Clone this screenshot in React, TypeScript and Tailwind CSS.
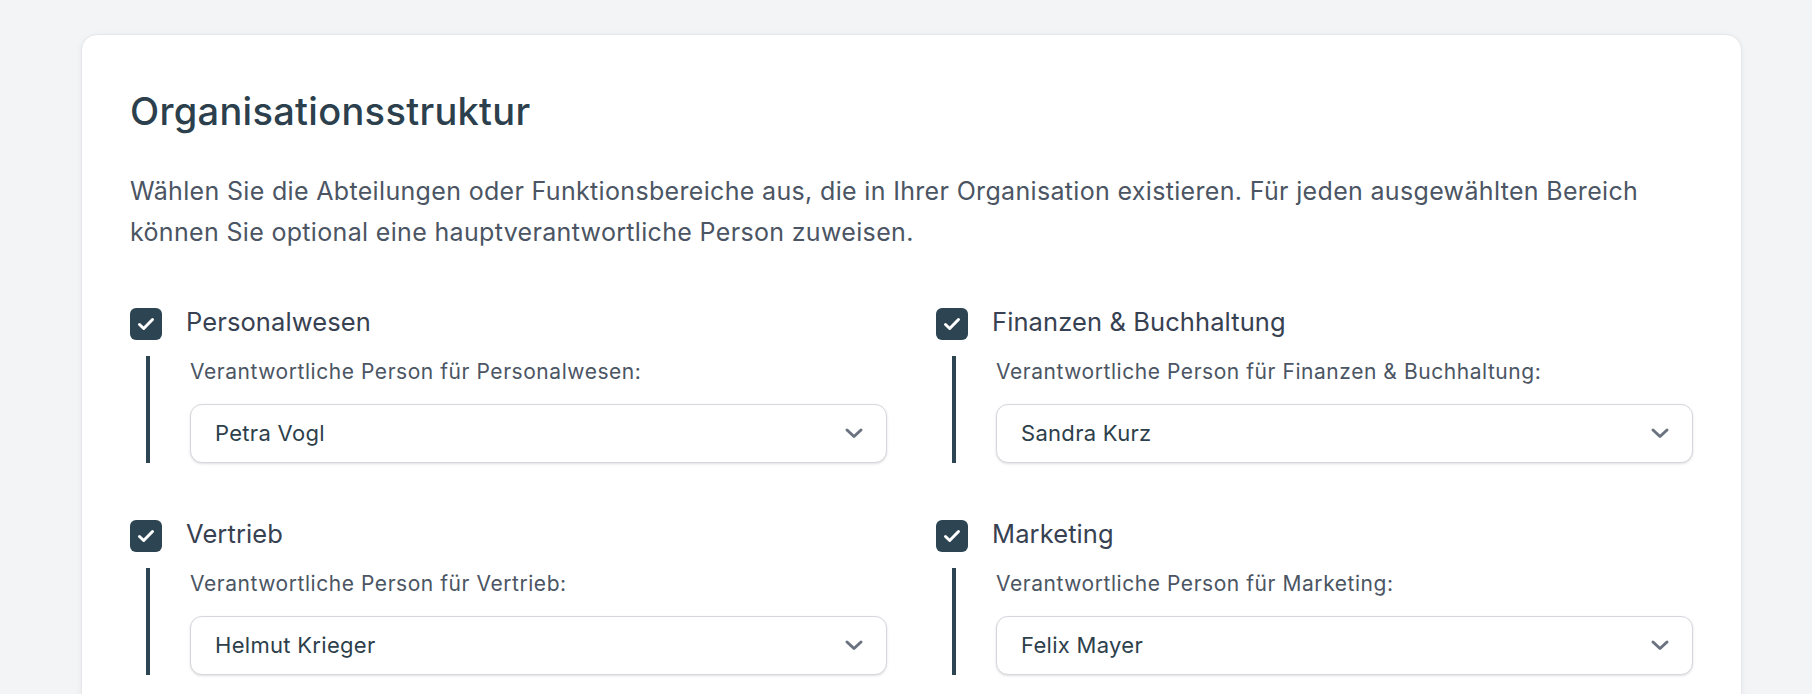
const bereiche = [
  { name: "Personalwesen", person: "Petra Vogl" },
  { name: "Finanzen & Buchhaltung", person: "Sandra Kurz" },
  { name: "Vertrieb", person: "Helmut Krieger" },
  { name: "Marketing", person: "Felix Mayer" },
];

const CheckIcon = () => (
  <svg width="18" height="14" viewBox="0 0 18 14" fill="none">
    <path d="M2.5 7.5l4.2 4 8.8-9" stroke="white" strokeWidth="3" strokeLinecap="round" strokeLinejoin="round" />
  </svg>
);

const Chevron = () => (
  <svg width="20" height="13" viewBox="0 0 20 13" fill="none">
    <path d="M3 3l7 6.5L17 3" stroke="#6b7280" strokeWidth="3" strokeLinecap="round" strokeLinejoin="round" />
  </svg>
);

const App = () => {
  return (
    <div className="min-h-screen bg-[#f3f4f6] pl-[81px] pr-[70px] pt-[34px] font-['Inter',sans-serif]">
      <div className="rounded-2xl border border-[#e5e7eb] bg-white px-12 pt-[54px] pb-12 shadow-[0_1px_6px_rgba(0,0,0,0.05)]">
        <h2 className="text-[38px] leading-[44px] font-medium tracking-[0.3px] text-[#2b404c]">Organisationsstruktur</h2>
        <p className="mt-[38px] text-[25px] leading-[41px] tracking-[0.33px] text-[#4b5563]">
          Wählen Sie die Abteilungen oder Funktionsbereiche aus, die in Ihrer Organisation existieren. Für jeden
          ausgewählten Bereich können Sie optional eine hauptverantwortliche Person zuweisen.
        </p>

        <div className="mt-[55px] grid grid-cols-2 gap-x-[49px] gap-y-[57px]">
          {bereiche.map((b) => (
            <div key={b.name}>
              {/* Checkbox mit Bereichsname */}
              <label className="flex items-center gap-6">
                <span className="flex h-8 w-8 shrink-0 items-center justify-center rounded-md bg-[#2d4552]">
                  <CheckIcon />
                </span>
                <span className="text-[25.5px] leading-8 tracking-[0.1px] text-[#374151] -mt-1">{b.name}</span>
              </label>

              {/* Verantwortliche Person */}
              <div className="mt-4 ml-4 border-l-4 border-[#2d4552] pl-10">
                <div className="text-[21px] leading-8 tracking-[0.55px] text-[#4b5563]">Verantwortliche Person für {b.name}:</div>
                <div className="mt-4 flex h-[59px] items-center justify-between rounded-xl border-[1.5px] border-[#d4d7dc] bg-white pl-6 pr-[22px] shadow-sm">
                  <span className="text-[22px] tracking-[0.3px] text-[#2d3f4b]">{b.person}</span>
                  <Chevron />
                </div>
              </div>
            </div>
          ))}
        </div>
      </div>
    </div>
  );
};

export default App;
